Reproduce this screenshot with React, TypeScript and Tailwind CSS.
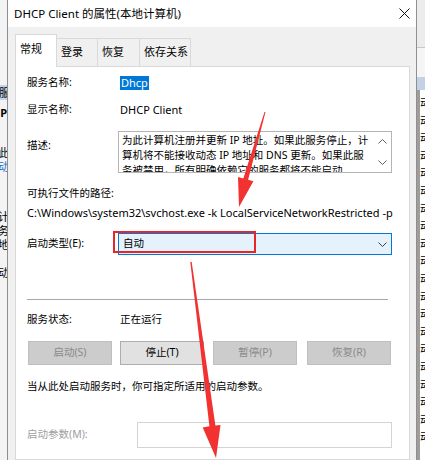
import React from "react";

function Chevron({ dir, className }: { dir: "up" | "down"; className?: string }) {
  return (
    <svg width="9" height="5" viewBox="0 0 9 5" className={className}>
      <polyline
        points={dir === "down" ? "0.5,0.5 4.5,4.5 8.5,0.5" : "0.5,4.5 4.5,0.5 8.5,4.5"}
        fill="none"
        stroke="currentColor"
        strokeWidth="1"
      />
    </svg>
  );
}

function LeftStrip() {
  return (
    <div className="flex w-[7px] shrink-0 flex-col overflow-hidden bg-[#f3f3f3] text-[11px] leading-[14px]">
      <div className="mt-[85px] flex h-[15px] items-center justify-end whitespace-nowrap bg-[#c4d3e8]">
        <span className="mr-[-3px]">服</span>
      </div>
      <div className="mt-[6px] flex h-[14px] justify-end whitespace-nowrap font-bold">CP</div>
      <div className="mt-[26px] flex h-[14px] justify-end whitespace-nowrap">
        <span className="mr-[-2px]">此</span>
      </div>
      <div className="flex h-[14px] justify-end whitespace-nowrap text-[#1a6fc9]">
        <span className="mr-[-2px]">动</span>
      </div>
      <div className="mt-[36px] flex h-[14px] justify-end whitespace-nowrap">
        <span className="mr-[-2px]">计</span>
      </div>
      <div className="flex h-[14px] justify-end whitespace-nowrap">
        <span className="mr-[-2px]">务</span>
      </div>
      <div className="flex h-[14px] justify-end whitespace-nowrap">
        <span className="mr-[-2px]">地</span>
      </div>
      <div className="mt-[14px] flex h-[14px] justify-end whitespace-nowrap">
        <span className="mr-[-2px]">动</span>
      </div>
    </div>
  );
}

function RightStrip() {
  const rows = Array.from({ length: 20 });
  return (
    <div className="flex w-[8px] shrink-0 flex-col overflow-hidden bg-white">
      <div className="h-[48px] border-b border-[#c8c8c8] bg-[#ececec]" />
      <div className="h-[29px] bg-[#f5f5f5]" />
      <div className="h-[13px] bg-[#c3d1e6]" />
      <div className="flex flex-1 border-l-[3px] border-[#9d9d9d]">
        <div className="flex flex-col pt-[4px] text-[11px] leading-[17.6px]">
          {rows.map((_, i) => (
            <span key={i} className="whitespace-nowrap">动</span>
          ))}
        </div>
      </div>
    </div>
  );
}

function Tabs() {
  return (
    <div className="relative z-10 flex h-[32px] items-end text-[11px]">
      <div className="mb-[-1px] flex h-[33px] w-[42px] items-start border border-b-0 border-[#d9d9d9] bg-white pl-[4px] pt-[4px] leading-[20px]">
        常规
      </div>
      <div className="flex h-[28px] w-[41px] items-start border border-b-0 border-l-0 border-[#d9d9d9] bg-[#f0f0f0] pl-[4px] pt-[3px] leading-[20px]">
        登录
      </div>
      <div className="flex h-[28px] w-[42px] items-start border border-b-0 border-l-0 border-[#d9d9d9] bg-[#f0f0f0] pl-[4px] pt-[3px] leading-[20px]">
        恢复
      </div>
      <div className="flex h-[28px] w-[51px] items-start border border-b-0 border-l-0 border-[#d9d9d9] bg-[#f0f0f0] pl-[4px] pt-[3px] leading-[20px]">
        依存关系
      </div>
    </div>
  );
}

function GeneralPage() {
  return (
    <div className="flex flex-1 flex-col border border-[#d9d9d9] bg-white pl-[11px] text-[10.5px]">
      <div className="mt-[6px] flex h-[20px] items-center">
        <span className="w-[93px]">服务名称:</span>
        <span className="bg-[#0078d7] px-[1px] text-[11px] leading-[14px] text-white">Dhcp</span>
      </div>

      <div className="mt-[7px] flex h-[20px] items-center">
        <span className="w-[93px]">显示名称:</span>
        <span className="text-[11px]">DHCP Client</span>
      </div>

      <div className="mt-[11px] flex items-start">
        <span className="w-[91px] pt-[4px] leading-[20px]">描述:</span>
        <div className="flex h-[42px] w-[274px] border border-[#b4b4b4] bg-white">
          <div className="flex-1 overflow-hidden whitespace-nowrap pl-[3px] pt-[1px] leading-[15px]">
            <div>为此计算机注册并更新 IP 地址。如果此服务停止，计</div>
            <div>算机将不能接收动态 IP 地址和 DNS 更新。如果此服</div>
            <div>务被禁用，所有明确依赖它的服务都将不能启动</div>
          </div>
          <div className="flex w-[17px] flex-col items-center justify-between py-[7px] text-[#606060]">
            <Chevron dir="up" />
            <Chevron dir="down" />
          </div>
        </div>
      </div>

      <div className="mt-[11px] flex h-[19px] items-center">可执行文件的路径:</div>
      <div className="flex h-[20px] items-center whitespace-nowrap text-[11px]">
        C:\Windows\system32\svchost.exe -k LocalServiceNetworkRestricted -p
      </div>

      <div className="mt-[10px] flex h-[22px] items-center">
        <span className="w-[91px]">启动类型(E):</span>
        <div className="relative flex h-[22px] w-[274px] items-center justify-between border border-[#0078d7] bg-[#e5f1fb] pl-[4px] pr-[4px]">
          <span>自动</span>
          <Chevron dir="down" className="text-[#404040]" />
          <div className="absolute left-[-6px] top-[-3px] h-[22px] w-[143px] border-2 border-[#e5262b]" />
        </div>
      </div>

      <div className="mt-[44px] h-[1px] w-[361px] bg-[#a8a8a8]" />

      <div className="mt-[10px] flex h-[20px] items-center">
        <span className="w-[93px]">服务状态:</span>
        <span>正在运行</span>
      </div>

      <div className="mt-[11px] flex h-[24px]">
        <div className="ml-[1px] flex w-[84px] items-center justify-center border border-[#bfbfbf] bg-[#cccccc] text-[#8a8a8a]">
          启动(S)
        </div>
        <div className="ml-[8px] flex w-[84px] items-center justify-center border border-[#adadad] bg-[#e1e1e1]">
          停止(T)
        </div>
        <div className="ml-[9px] flex w-[84px] items-center justify-center border border-[#bfbfbf] bg-[#cccccc] text-[#8a8a8a]">
          暂停(P)
        </div>
        <div className="ml-[10px] flex w-[84px] items-center justify-center border border-[#bfbfbf] bg-[#cccccc] text-[#8a8a8a]">
          恢复(R)
        </div>
      </div>

      <div className="mt-[12px] flex h-[20px] items-center whitespace-nowrap">
        当从此处启动服务时，你可指定所适用的启动参数。
      </div>

      <div className="mt-[25px] flex h-[26px] items-center">
        <span className="w-[110px] text-[#a0a0a0]">启动参数(M):</span>
        <div className="h-[26px] w-[255px] border border-[#d4d4d4] bg-white" />
      </div>
    </div>
  );
}

function Dialog() {
  return (
    <div className="flex w-[410px] shrink-0 flex-col border-x border-[#8f8f8f] bg-[#f0f0f0]">
      <div className="flex h-[27px] items-center justify-between bg-white pl-[6px] pr-[6px]">
        <span className="text-[11.5px]">DHCP Client 的属性(本地计算机)</span>
        <svg width="11" height="11" viewBox="0 0 11 11">
          <path d="M0.5 0.5 L10.5 10.5 M10.5 0.5 L0.5 10.5" stroke="#111" strokeWidth="1" fill="none" />
        </svg>
      </div>
      <div className="flex flex-1 flex-col pl-[7px] pr-[6px] pt-[7px]">
        <Tabs />
        <GeneralPage />
      </div>
    </div>
  );
}

function Arrows() {
  return (
    <svg
      className="pointer-events-none absolute inset-0"
      width="425"
      height="460"
      viewBox="0 0 425 460"
    >
      {/* upper arrow, pointing at the startup type box */}
      <polygon
        points="265.5,112 264.5,112 243.3,178.4 238,176.9 239,207 253.4,181.3 248.1,179.8"
        fill="#f23131"
      />
      {/* lower arrow, pointing down the page */}
      <polygon
        points="191.7,262 190.3,262 209.4,426.3 202.7,427.4 216,458 220.5,425.1 215.4,425.6"
        fill="#f23131"
      />
    </svg>
  );
}

export default function App() {
  return (
    <div className="relative flex h-[460px] w-[425px] overflow-hidden bg-[#f0f0f0] font-['Noto_Sans','Noto_Sans_CJK_SC',sans-serif] text-[11px] text-black">
      <LeftStrip />
      <Dialog />
      <RightStrip />
      <Arrows />
    </div>
  );
}
